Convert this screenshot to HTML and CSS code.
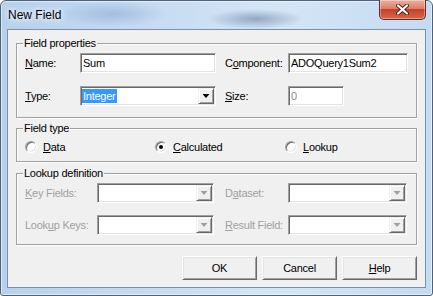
FILE: index.html
```html
<!DOCTYPE html>
<html lang="en">
<head>
   <meta charset="UTF-8">
   <meta name="viewport" content="width=device-width, initial-scale=1.0">
   <title>New Field</title>
   <link rel="stylesheet" href="styles.css">
</head>
<body>
   <div class="window">
       <div class="titlebar">
           <span class="title">New Field</span>
           <button class="close" type="button" aria-label="Close">
               <svg width="13" height="11" viewBox="0 0 13 11">
                   <path d="M2 1.5 L11 9.5 M11 1.5 L2 9.5" stroke="#4b1e16" stroke-width="4" stroke-linecap="round"/>
                   <path d="M2 1.5 L11 9.5 M11 1.5 L2 9.5" stroke="#fff" stroke-width="2.2" stroke-linecap="round"/>
               </svg>
           </button>
       </div>

       <div class="client">
           <fieldset class="group props">
               <legend>Field properties</legend>
               <div class="grid props-grid">
                   <label><u>N</u>ame:</label>
                   <div class="edit">Sum</div>
                   <label class="label-r">C<u>o</u>mponent:</label>
                   <div class="edit">ADOQuery1Sum2</div>

                   <label><u>T</u>ype:</label>
                   <div class="combo">
                       <span class="value"><span class="sel">Integer</span></span>
                       <span class="drop"><i class="arrow"></i></span>
                   </div>
                   <label class="label-r"><u>S</u>ize:</label>
                   <div class="edit size">0</div>
               </div>
           </fieldset>

           <fieldset class="group kind">
               <legend>Field type</legend>
               <div class="radios">
                   <div class="option"><span class="radio"></span><span><u>D</u>ata</span></div>
                   <div class="option"><span class="radio checked"></span><span><u>C</u>alculated</span></div>
                   <div class="option"><span class="radio"></span><span><u>L</u>ookup</span></div>
               </div>
           </fieldset>

           <fieldset class="group lookup">
               <legend>Lookup definition</legend>
               <div class="grid lookup-grid">
                   <label class="disabled"><u>K</u>ey Fields:</label>
                   <div class="combo off"><span class="value"></span><span class="drop"><i class="arrow"></i></span></div>
                   <label class="label-r disabled">D<u>a</u>taset:</label>
                   <div class="combo off"><span class="value"></span><span class="drop"><i class="arrow"></i></span></div>

                   <label class="disabled">Look<u>u</u>p Keys:</label>
                   <div class="combo off"><span class="value"></span><span class="drop"><i class="arrow"></i></span></div>
                   <label class="label-r disabled"><u>R</u>esult Field:</label>
                   <div class="combo off"><span class="value"></span><span class="drop"><i class="arrow"></i></span></div>
               </div>
           </fieldset>

           <div class="actions">
               <button class="btn" type="button">OK</button>
               <button class="btn" type="button">Cancel</button>
               <button class="btn" type="button"><u>H</u>elp</button>
           </div>
       </div>
   </div>
</body>
</html>
```

FILE: styles.css
```css
* {
    box-sizing: border-box;
}

body {
    margin: 0;
    font-family: "Liberation Sans", Arial, sans-serif;
    font-size: 11px;
    letter-spacing: -0.25px;
    color: #000;
    background: #fff;
}

u {
    text-decoration-thickness: 1px;
    text-underline-offset: 1px;
}

/* window frame */
.window {
    width: 433px;
    height: 296px;
    display: flex;
    flex-direction: column;
    padding: 0 6px 7px;
    border: 1px solid #4c617c;
    border-radius: 6px 6px 3px 3px;
    background:
        radial-gradient(ellipse 55px 13px at 112px 13px, rgba(105, 140, 185, .35), transparent),
        radial-gradient(ellipse 48px 10px at 255px 18px, rgba(70, 95, 130, .45), transparent),
        linear-gradient(to right, #b7d1ec, #d4e5f6 65%, #c4dbf2);
    box-shadow: inset 0 0 0 1px rgba(255, 255, 255, .55);
}

.titlebar {
    height: 28px;
    display: flex;
    justify-content: space-between;
    align-items: flex-start;
}

.title {
    padding: 7px 0 0 1px;
    font-size: 12px;
    line-height: 14px;
    letter-spacing: 0;
    text-shadow: 0 0 5px #fff, 0 0 9px #fff;
}

.close {
    width: 47px;
    height: 20px;
    margin-top: -1px;
    padding: 0;
    display: flex;
    align-items: center;
    justify-content: center;
    border: 1px solid #6e2a1f;
    border-top: none;
    border-radius: 0 0 5px 5px;
    background: linear-gradient(#eab0a2, #d98068 45%, #c4402a 50%, #d4684b);
    box-shadow: inset 0 0 0 1px rgba(255, 255, 255, .35);
}

.client {
    flex: 1;
    display: flex;
    flex-direction: column;
    padding: 0 8px 7px;
    background: #f0f0f0;
    border: 1px solid #7d8fa6;
}

/* etched group boxes */
.group {
    margin: 0;
    min-width: 0;
    border: 1px solid #a0a0a0;
    box-shadow: inset 1px 1px 0 #fff, 1px 1px 0 #fff;
}

.group legend {
    margin-left: -2px;
    padding: 0 1px;
    line-height: 13px;
    background: #f0f0f0;
}

.props {
    margin-top: 7px;
    padding: 3px 8px 11px;
}

.kind {
    margin-top: 4px;
    padding: 5px 8px 7px;
}

.lookup {
    margin-top: 5px;
    padding: 3px 8px 9px;
}

.grid {
    display: grid;
    grid-auto-rows: 20px;
    align-items: center;
}

.props-grid {
    grid-template-columns: 55px 136px 72px 120px;
    row-gap: 13px;
}

.lookup-grid {
    grid-template-columns: 72px 117px 74px 119px;
    row-gap: 12px;
}

.label-r {
    padding-left: 9px;
}

.lookup-grid .label-r {
    padding-left: 11px;
}

.disabled {
    color: #a0a0a0;
}

/* sunken edits and combos */
.edit,
.combo {
    height: 20px;
    background: #fff;
    border: 1px solid;
    border-color: #a0a0a0 #fff #fff #a0a0a0;
    box-shadow: inset 1px 1px 0 #696969, inset -1px -1px 0 #e3e3e3;
}

.edit {
    padding: 0 2px;
    line-height: 18px;
    white-space: nowrap;
    overflow: hidden;
}

.size {
    width: 56px;
    color: #8a8a8a;
}

.combo {
    display: flex;
    padding: 1px;
}

.combo .value {
    flex: 1;
    display: flex;
    align-items: center;
}

.sel {
    padding: 0 1px;
    line-height: 14px;
    background: #3399ff;
    color: #fff;
}

.drop {
    width: 16px;
    display: flex;
    align-items: center;
    justify-content: center;
    background: #f0f0f0;
    border: 1px solid;
    border-color: #f0f0f0 #696969 #696969 #f0f0f0;
    box-shadow: inset 1px 1px 0 #fff, inset -1px -1px 0 #a0a0a0;
}

.arrow {
    width: 7px;
    height: 4px;
    background: #000;
    clip-path: polygon(0 0, 100% 0, 50% 100%);
}

.off .arrow {
    background: #a0a0a0;
}

/* radio buttons */
.radios {
    display: grid;
    grid-template-columns: 130px 130px 130px;
    height: 14px;
}

.option {
    display: flex;
    align-items: center;
    gap: 6px;
}

.radio {
    width: 12px;
    height: 12px;
    display: grid;
    place-items: center;
    border-radius: 50%;
    background: #fff;
    border: 1px solid;
    border-color: #a0a0a0 #fff #fff #a0a0a0;
    box-shadow: inset 1px 1px 0 #696969, inset -1px -1px 0 #e3e3e3;
}

.radio.checked::after {
    content: "";
    width: 4px;
    height: 4px;
    border-radius: 50%;
    background: #000;
}

/* buttons */
.actions {
    margin-top: 11px;
    display: flex;
    justify-content: flex-end;
    gap: 5px;
}

.btn {
    width: 75px;
    height: 24px;
    padding: 0;
    font: inherit;
    letter-spacing: inherit;
    color: #000;
    background: #f0f0f0;
    border: 1px solid;
    border-color: #fff #696969 #696969 #fff;
    box-shadow: inset 1px 1px 0 #e3e3e3, inset -1px -1px 0 #a0a0a0;
}
```
